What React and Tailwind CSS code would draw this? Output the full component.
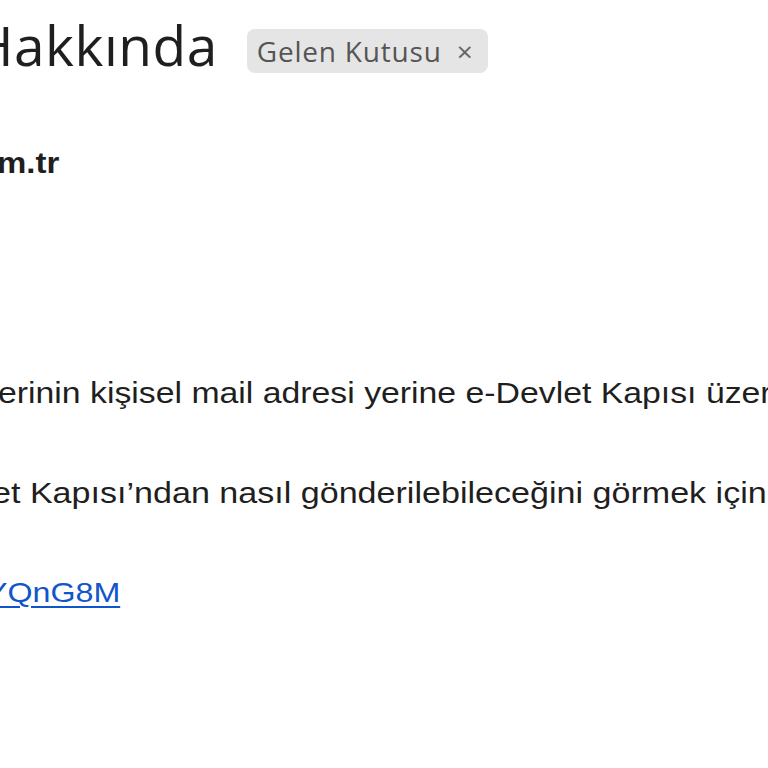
export default function App() {
  const body = { fontFamily: '"Liberation Sans", Arial, sans-serif' }
  const heading = { fontFamily: '"Open Sans", "Noto Sans", sans-serif' }

  return (
    <div className="w-[768px] h-[768px] overflow-hidden bg-white text-[#1f1f1f]">
      {/* subject + label chip */}
      <div className="flex items-start gap-[29px] pt-[29px] whitespace-nowrap">
        <span className="-ml-[27px] -mt-[6px] text-[55px] leading-[44px] tracking-[0.5px] text-[#1f1f1f]" style={heading}>
          Hakkında
        </span>
        <span className="flex items-center h-[44px] w-[241px] shrink-0 rounded-[8px] bg-[#e5e5e5] pl-[10px] text-[28px] leading-[44px] tracking-[0.8px] text-[#555]" style={heading}>
          Gelen Kutusu
          <span className="ml-[15px] text-[28px] text-[#666]">×</span>
        </span>
      </div>

      {/* sender */}
      <div className="mt-[70px] -ml-[3px] text-[30px] leading-[40px] font-bold text-[#1f1f1f] whitespace-nowrap origin-left scale-x-[1.1]" style={body}>
        m.tr
      </div>

      {/* message body */}
      <div className="mt-[190px] text-[29px] leading-[40px] text-[#1f1f1f] whitespace-nowrap" style={body}>
        <p className="-ml-[2px] origin-left scale-x-[1.165]">
          erinin kişisel mail adresi yerine e-Devlet Kapısı üzerinden
        </p>
        <p className="mt-[60px] -ml-[8px] origin-left scale-x-[1.175]">
          et Kapısı’ndan nasıl gönderilebileceğini görmek için
        </p>
        <p className="mt-[60px] -ml-[14px] text-[28px] origin-left scale-x-[1.15]">
          <a href="#" className="text-[#1155cc] underline decoration-[2px] underline-offset-[4px]">
            YQnG8M
          </a>
        </p>
      </div>
    </div>
  )
}
